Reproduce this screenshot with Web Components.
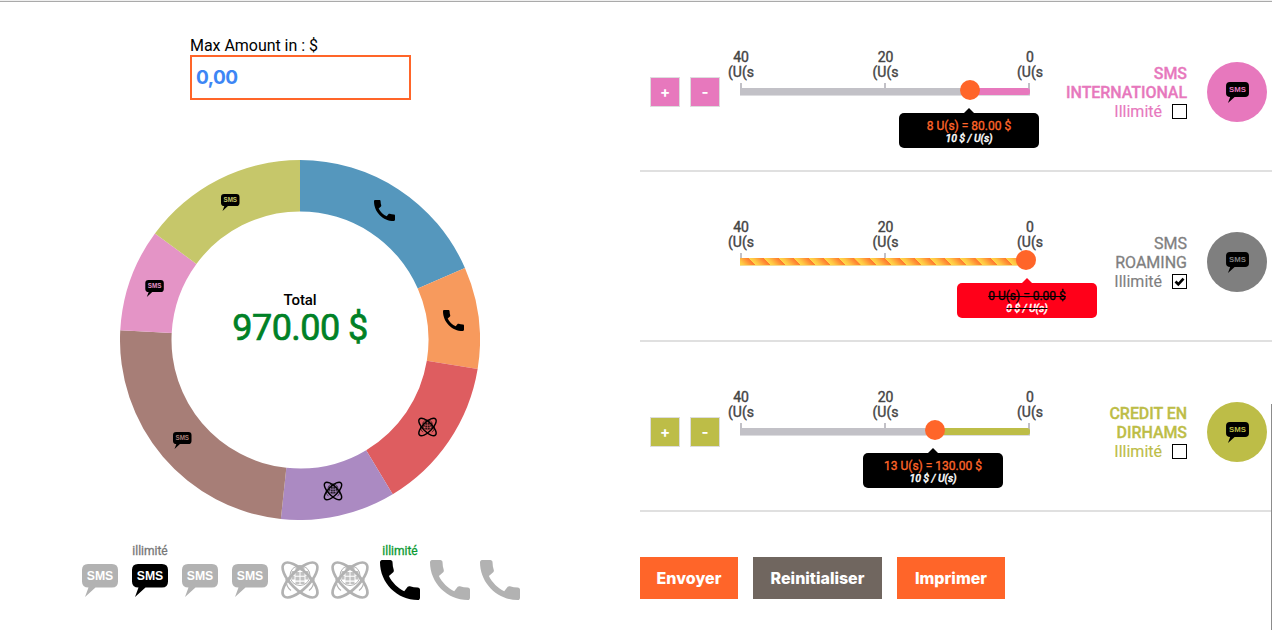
<!DOCTYPE html>
<html lang="fr">
<head>
<meta charset="utf-8">
<title>Simulateur</title>
<style>
html,body{margin:0;height:630px;overflow:hidden;background:#fff;font-family:Roboto,"Liberation Sans",sans-serif;font-size:16px;color:#000}
</style>
</head>
<body>
<offer-app></offer-app>
<script>
const ICONS = {
  sms: (ink) => `<path fill="currentColor" d="M6 0H30Q36 0 36 6V17.500Q36 23.500 30 23.500H13.500L3 33L6.500 23.500Q0 23.500 0 17.500V6Q0 0 6 0Z"/><text x="18" y="16.300" text-anchor="middle" textLength="26.500" lengthAdjust="spacingAndGlyphs" font-family="Liberation Sans, sans-serif" font-weight="700" font-size="12.500" fill="${ink}">SMS</text>`,
  phone: () => `<path fill="currentColor" d="M20.010 15.380c-1.230 0-2.420-.2-3.530-.56-.35-.12-.74-.03-1.010.24l-1.570 1.970c-2.830-1.350-5.480-3.900-6.890-6.830l1.950-1.660c.27-.28.35-.67.24-1.020-.37-1.110-.56-2.300-.56-3.530 0-.54-.45-.99-.99-.99H4.190C3.650 3 3 3.240 3 3.990 3 13.280 10.730 21 20.010 21c.71 0 .99-.63.99-1.180v-3.450c0-.54-.45-.99-.99-.99z"/>`,
  globe: () => `<g fill="none" stroke="currentColor"><circle cx="19" cy="14.500" r="10" stroke-width="1"/><path stroke-width="4" stroke-opacity=".8" d="M16.500 6v17M21.500 6v17" stroke-dasharray="3.800 1.100"/><path stroke-width="3" stroke-opacity=".8" d="M12 9.900v9M26 9.900v9" stroke-dasharray="3.800 1.100"/><path stroke-width="1.200" d="M5 18q0 8 5 11.500M8 18q1 6 7 9.500M33 18q0 8-5 11.500M30 18q-1 6-7 9.500"/><ellipse cx="19" cy="19" rx="22.800" ry="9.300" stroke-width="2.700" transform="rotate(45 19 19)"/><ellipse cx="19" cy="19" rx="22.800" ry="9.300" stroke-width="2.700" transform="rotate(-45 19 19)"/></g>`
};
const BOX = {sms:'0 0 36 33', phone:'3 3 18 18', globe:'0 0 38 38'};

customElements.define('app-icon', class extends HTMLElement {
  connectedCallback() {
    const n = this.getAttribute('name');
    this.attachShadow({mode:'open'}).innerHTML = `<style>:host{display:block;line-height:0}svg{display:block;width:100%;height:100%;overflow:visible}</style>
      <svg viewBox="${BOX[n]}">${ICONS[n](this.getAttribute('ink') || '#fff')}</svg>`;
  }
});

customElements.define('amount-field', class extends HTMLElement {
  connectedCallback() {
    this.attachShadow({mode:'open'}).innerHTML = `<style>
      :host{display:block;width:221px}
      label{display:block;line-height:19px;letter-spacing:-.04px}
      .box{box-sizing:border-box;height:45px;border:2px solid #ff6529;padding:0 4px;font:700 19px/42px Inter,sans-serif;letter-spacing:-.55px;color:#3d86f5}
      </style><label>Max Amount in : $</label><div class="box"><slot></slot></div>`;
  }
});

customElements.define('usage-donut', class extends HTMLElement {
  connectedCallback() {
    const stops = [0,66.400,99.300,149,186.100,273.100,306.300,360];
    const parts = [
      ['#5597bd','phone',374,200,21,21],['#f79a5d','phone',443,310,21,21],
      ['#de5d60','globe',418,417.500,19,19],['#ab8ac2','globe',323.500,481.500,19,19],
      ['#a77e77','sms',173,432,18.500,17],['#e494c6','sms',145.300,280,18.500,17],['#c6c76a','sms',221,194,18.500,17]];
    const pt = (r,a) => { a = a*Math.PI/180; return (180+r*Math.sin(a)).toFixed(2)+' '+(180-r*Math.cos(a)).toFixed(2); };
    let s = '';
    parts.forEach(([c,n,x,y,w,h],i) => {
      const a = stops[i], b = stops[i+1];
      s += `<path fill="${c}" d="M${pt(180,a)}A180 180 0 0 1 ${pt(180,b)}L${pt(128.500,b)}A128.500 128.500 0 0 0 ${pt(128.500,a)}Z"/>
        <svg x="${x-120}" y="${y-160}" width="${w}" height="${h}" viewBox="${BOX[n]}" color="#000" overflow="visible">${ICONS[n](c)}</svg>`;
    });
    this.attachShadow({mode:'open'}).innerHTML = `<style>
      :host{display:grid;width:360px;height:360px}
      :host>*{grid-area:1/1}
      .total{align-self:start;text-align:center;padding-top:131px;font-size:15px;line-height:18px;font-weight:500;letter-spacing:-.1px}
      .sum{font-size:36px;line-height:39px;letter-spacing:-.55px;color:#008126;font-weight:400;-webkit-text-stroke:.7px #008126}
      </style><svg width="360" height="360">${s}</svg>
      <div class="total">Total<div class="sum"><slot></slot></div></div>`;
  }
});

customElements.define('service-item', class extends HTMLElement {
  connectedCallback() {
    const n = this.getAttribute('icon'), on = this.hasAttribute('on');
    const size = {sms:'width:36px;height:33px;margin-top:4px', globe:'width:38px;height:38px;margin-top:1px', phone:'width:40px;height:40px'}[n];
    this.attachShadow({mode:'open'}).innerHTML = `<style>
      :host{display:flex;flex-direction:column;align-items:center;width:50px;color:${on?'#000':'#b2b2b2'}}
      span{height:18px;font-size:12px;line-height:18px;color:${this.getAttribute('tone')||'#777'};-webkit-text-stroke:.3px}
      app-icon{${size}}
      </style><span><slot></slot></span><app-icon name="${n}"></app-icon>`;
  }
});

customElements.define('unit-slider', class extends HTMLElement {
  connectedCallback() {
    const g = k => this.getAttribute(k), off = this.hasAttribute('off');
    const v = +g('knob');
    this.attachShadow({mode:'open'}).innerHTML = `<style>
      :host{display:block;position:relative;width:290px;height:170px}
      .labels{display:flex;justify-content:space-between;padding-top:48px;margin:0 -20px 0 -19px;color:#444}
      .labels div{width:40px;text-align:center;font-size:14px;line-height:15px;-webkit-text-stroke:.4px}
      .ticks{display:flex;justify-content:space-between;height:5px;margin:3px 0 0 0}
      .ticks i{width:2px;height:12px;background:#c2c1c7}
      .track{position:relative;height:8px;box-sizing:border-box;background:${off
        ?'repeating-linear-gradient(45deg,#ffd84a 0,#ffc743 3px,#ff9236 8px,#ff7a2e 10.600px,#ffd84a 10.700px)':'#c2c1c7'};
        border-bottom:1px solid ${off?'#f4dc92':'#dddde0'}}
      .fill{position:absolute;left:${v}px;right:0;top:0;height:7px;background:var(--tone);border-bottom:1px solid var(--tone);border-radius:0 3px 3px 0;box-sizing:border-box;display:${off?'none':'block'}}
      .knob{position:absolute;left:${v-10}px;top:78.400px;width:20px;height:20px;border-radius:50%;background:#ff6529}
      .tip{position:absolute;left:${g('tip')}px;top:111.400px;width:140px;height:35px;box-sizing:border-box;padding-top:7px;border-radius:5px;background:${off?'#ff0019':'#000'};color:${off?'#000':'#ff6529'};text-align:center;font-size:12px;line-height:13px;-webkit-text-stroke:.35px;${off?'text-decoration:line-through #000;':''}}
      .tip:before{content:"";position:absolute;left:64px;top:-5px;border:6px solid transparent;border-top:0;border-bottom-color:${off?'#ff0019':'#000'}}
      .tip em{display:block;font-size:10.500px;line-height:12px;font-weight:500;letter-spacing:-.1px;color:#fff}
      </style>
      <div class="labels"><div>40<br>(U(s</div><div>20<br>(U(s</div><div>0<br>(U(s</div></div>
      <div class="ticks"><i></i><i></i><i></i></div><div class="track"><div class="fill"></div></div>
      <div class="knob"></div><div class="tip">${g('amount')}<em>${g('rate')}</em></div>`;
  }
});

customElements.define('service-row', class extends HTMLElement {
  connectedCallback() {
    const g = k => this.getAttribute(k), off = this.hasAttribute('off'), c = g('tone');
    this.attachShadow({mode:'open'}).innerHTML = `<style>
      :host{--tone:${c};display:flex;box-sizing:border-box;height:170px;border-bottom:2px solid #e0e0e0;padding:0 5px 0 10px;color:${c}}
      .steps{display:flex;gap:10px;width:90px;padding-top:75px;visibility:${off?'hidden':'visible'}}
      .steps b{box-sizing:border-box;width:30px;height:30px;border:1px solid #ddd;background:${c};color:#fff;text-align:center;font:700 15px/27px Inter,sans-serif}
      .name{flex:1;text-align:right;padding:62px 20px 0 0;line-height:19px;-webkit-text-stroke:.15px}
      .name strong{font-weight:${off?400:500};letter-spacing:${off?0:-.06}px;-webkit-text-stroke:.3px}
      .opt{display:flex;justify-content:flex-end;align-items:center;gap:10px}
      .check{box-sizing:border-box;width:15px;height:15px;border:1px solid #000;background:#fff}
      .check svg{display:block}
      .badge{box-sizing:border-box;width:60px;height:60px;margin-top:60px;border-radius:50%;background:${c};color:#000;display:flex;align-items:center;justify-content:center}
      app-icon{width:23px;height:21px}
      </style>
      <div class="steps">${off?'':'<b>+</b><b>-</b>'}</div>
      <unit-slider ${off?'off':''} knob="${g('knob')}" tip="${g('tip')}" amount="${g('amount')}" rate="${g('rate')}"></unit-slider>
      <div class="name"><strong><slot></slot></strong>
      <div class="opt">Illimité<div class="check">${off?'<svg width="13" height="13" viewBox="0 0 13 13"><path d="M2.500 6.500L5.300 9.300L10.500 3.700" fill="none" stroke="#000" stroke-width="2.700"/></svg>':''}</div></div></div>
      <div class="badge"><app-icon name="sms" ink="${c}"></app-icon></div>`;
  }
});

customElements.define('action-button', class extends HTMLElement {
  connectedCallback() {
    this.attachShadow({mode:'open'}).innerHTML = `<style>
      :host{display:block;box-sizing:border-box;height:42px;width:${this.getAttribute('w')}px;background:${this.hasAttribute('muted')?'#70665f':'#ff6529'};color:#fff;text-align:center;font:800 16px/42px Inter,sans-serif}
      </style><slot></slot>`;
  }
});

customElements.define('offer-app', class extends HTMLElement {
  connectedCallback() {
    this.attachShadow({mode:'open'}).innerHTML = `<style>
      :host{display:grid;grid-template:2px 628px/640px 632px;overflow:hidden;height:630px}
      .top{grid-column:1/3;box-sizing:border-box;background:#efefef;border-bottom:1px solid #aaa}
      .left{position:relative}
      amount-field{margin:34px 0 0 190px}
      usage-donut{margin:60px 0 0 120px}
      .items{display:flex;margin:22px 0 0 75px}
      .right{position:relative}
      .actions{display:flex;gap:15px;padding-top:45px}
      .scroll{position:absolute;right:0;top:402px;width:1px;height:226px;background:#8c8c8c}
      </style>
      <div class="top"></div>
      <div class="left">
        <amount-field>0,00</amount-field>
        <usage-donut>970.00 $</usage-donut>
        <div class="items">
          <service-item icon="sms"></service-item><service-item icon="sms" on>illimité</service-item>
          <service-item icon="sms"></service-item><service-item icon="sms"></service-item>
          <service-item icon="globe"></service-item><service-item icon="globe"></service-item>
          <service-item icon="phone" on tone="#0c9a32">illimité</service-item>
          <service-item icon="phone"></service-item><service-item icon="phone"></service-item>
        </div>
      </div>
      <div class="right">
        <service-row tone="#e778bd" knob="230" tip="159" amount="8 U(s) = 80.00 $" rate="10 $ / U(s)">SMS<br>INTERNATIONAL</service-row>
        <service-row off tone="#7f7f7f" knob="286" tip="217" amount="0 U(s) = 0.00 $" rate="0 $ / U(s)">SMS<br>ROAMING</service-row>
        <service-row tone="#bdbd47" knob="195" tip="123" amount="13 U(s) = 130.00 $" rate="10 $ / U(s)">CREDIT EN<br>DIRHAMS</service-row>
        <div class="actions"><action-button w="98">Envoyer</action-button><action-button muted w="129">Reinitialiser</action-button><action-button w="108">Imprimer</action-button></div>
        <div class="scroll"></div>
      </div>`;
  }
});
</script>
</body>
</html>
